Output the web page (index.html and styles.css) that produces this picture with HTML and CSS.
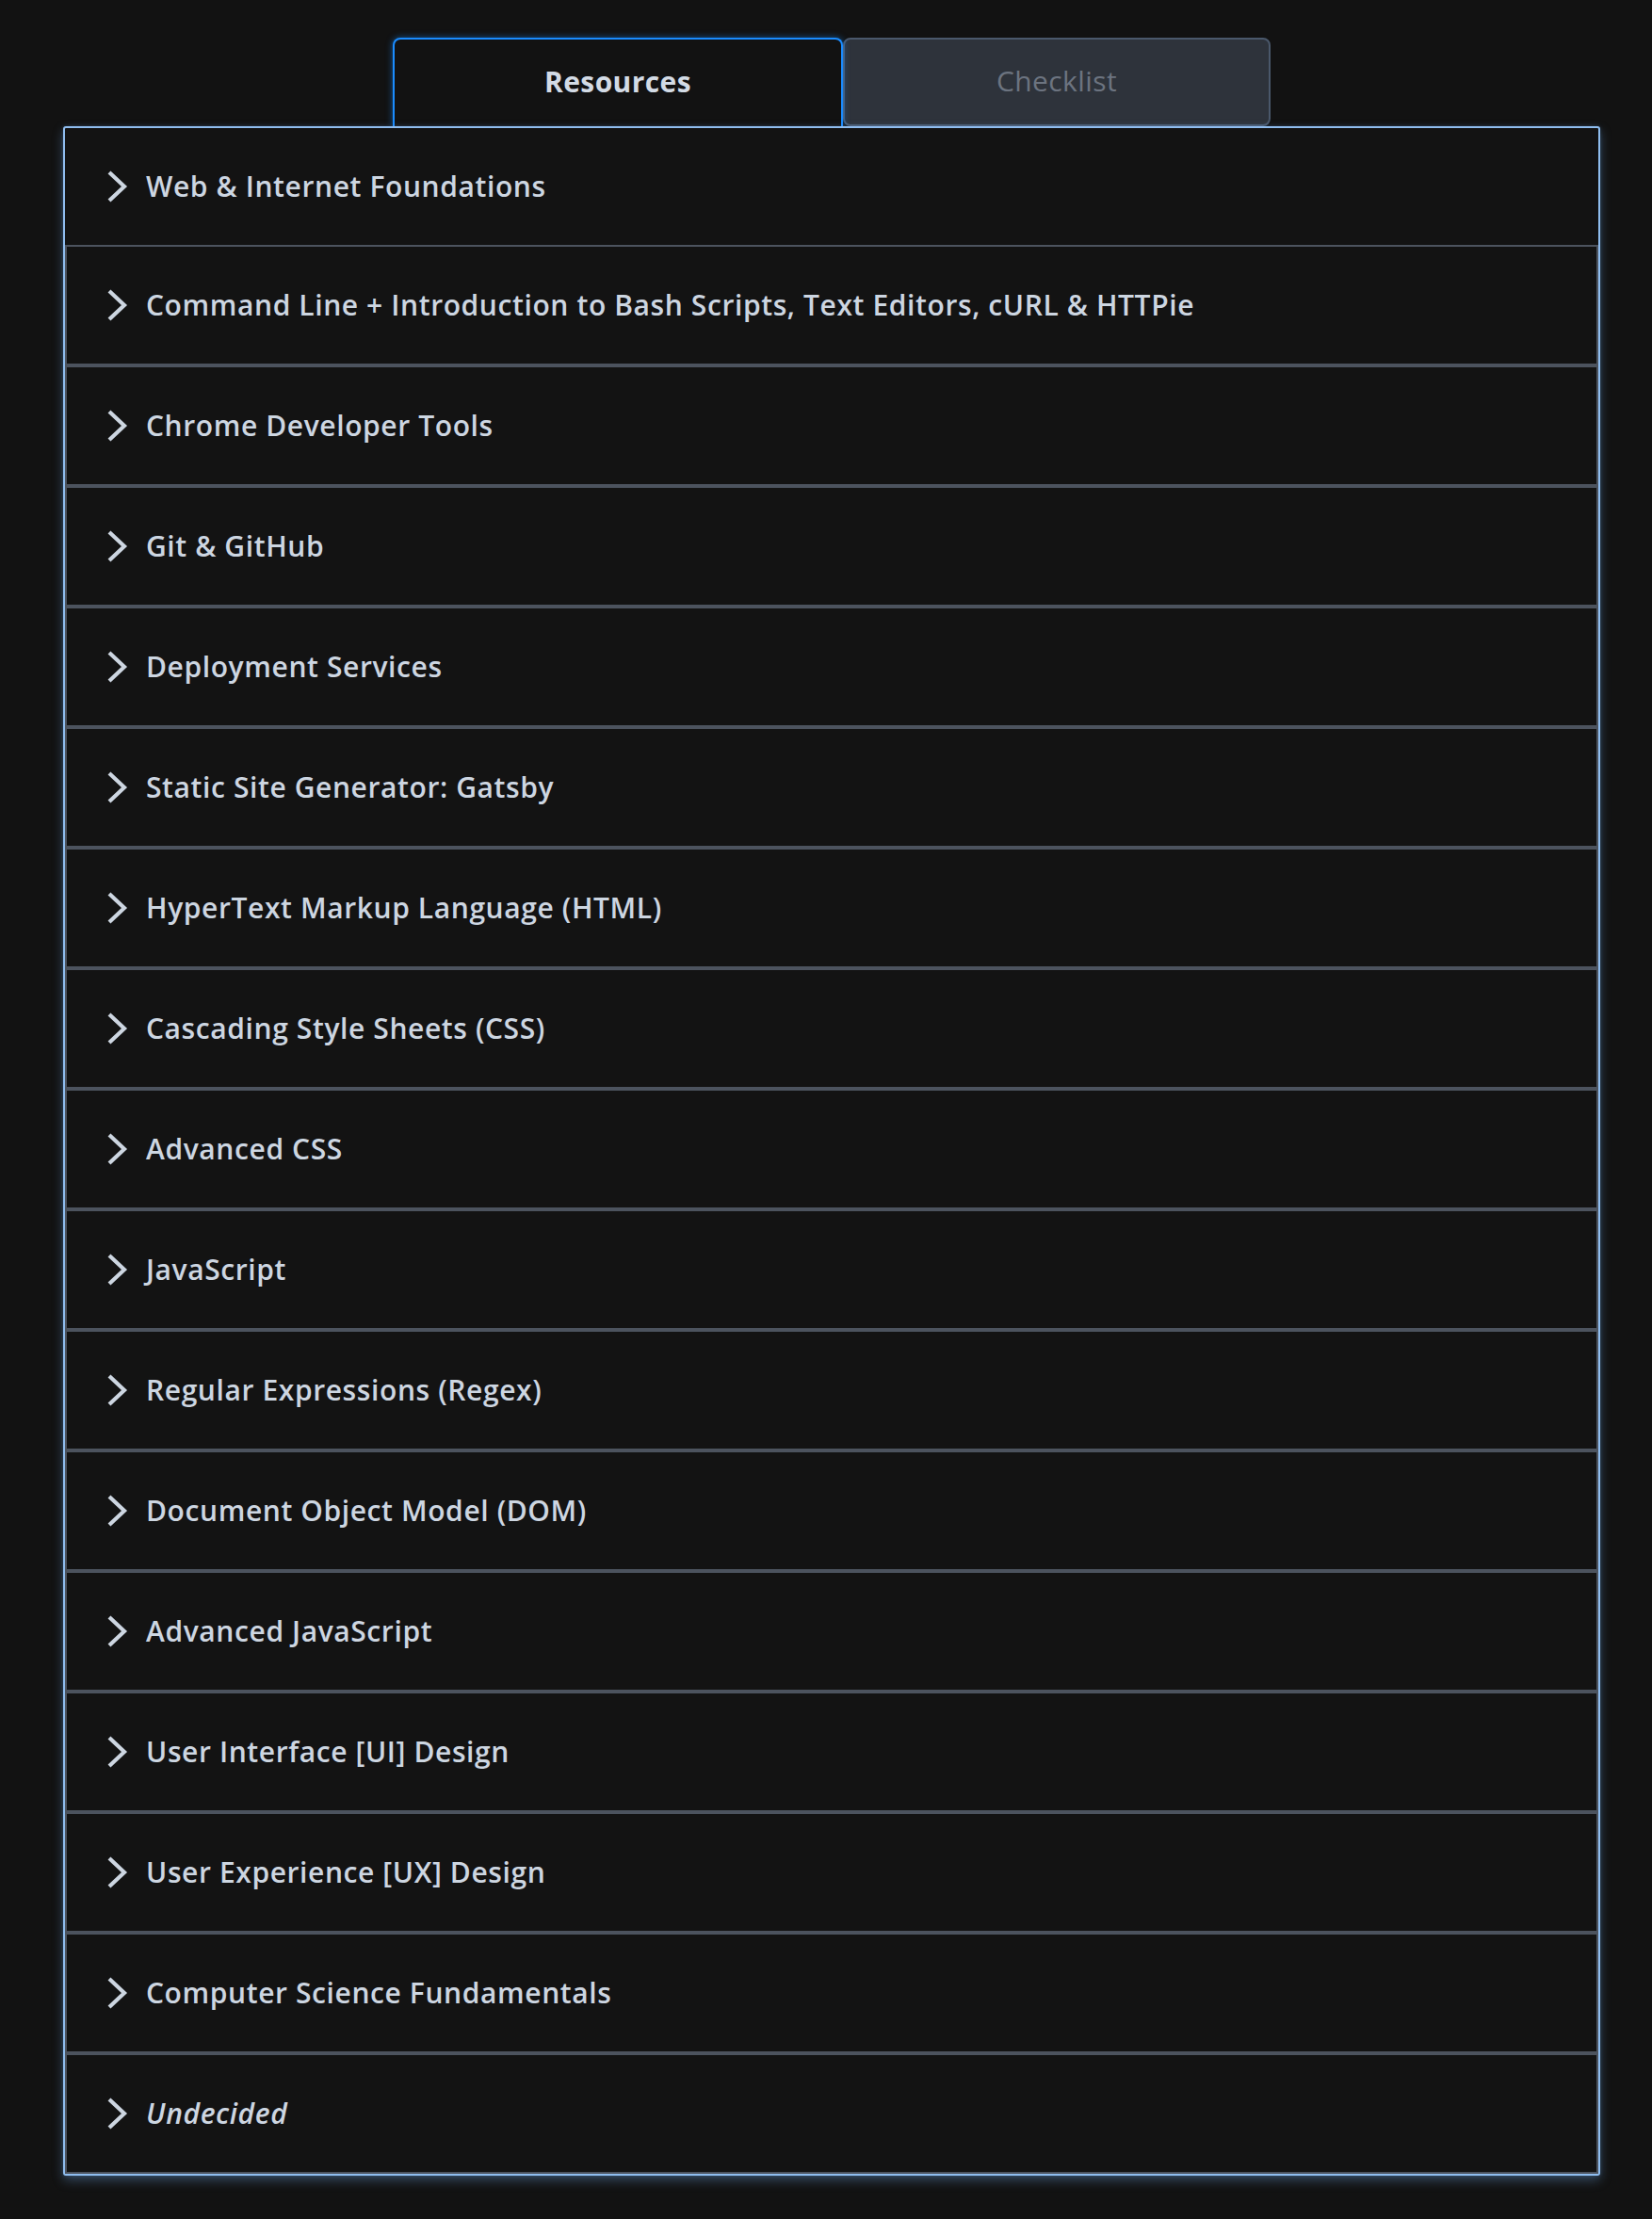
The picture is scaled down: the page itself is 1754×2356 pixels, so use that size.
FILE: index.html
```html
<!DOCTYPE html>
<html lang="en">
<head>
<meta charset="utf-8">
<title>Resources</title>
<link rel="stylesheet" href="styles.css">
</head>
<body>
<div class="page">
  <div class="tabs">
    <button class="tab tab-active">Resources</button>
    <button class="tab tab-inactive">Checklist</button>
  </div>
  <div class="accordion">
    <div class="item item-first"><svg class="chev" viewBox="0 0 24 34"><polyline points="3,2 19,17 3,32"/></svg><span class="label">Web &amp; Internet Foundations</span></div>
    <div class="item"><svg class="chev" viewBox="0 0 24 34"><polyline points="3,2 19,17 3,32"/></svg><span class="label">Command Line + Introduction to Bash Scripts, Text Editors, cURL &amp; HTTPie</span></div>
    <div class="item"><svg class="chev" viewBox="0 0 24 34"><polyline points="3,2 19,17 3,32"/></svg><span class="label">Chrome Developer Tools</span></div>
    <div class="item"><svg class="chev" viewBox="0 0 24 34"><polyline points="3,2 19,17 3,32"/></svg><span class="label">Git &amp; GitHub</span></div>
    <div class="item"><svg class="chev" viewBox="0 0 24 34"><polyline points="3,2 19,17 3,32"/></svg><span class="label">Deployment Services</span></div>
    <div class="item"><svg class="chev" viewBox="0 0 24 34"><polyline points="3,2 19,17 3,32"/></svg><span class="label">Static Site Generator: Gatsby</span></div>
    <div class="item"><svg class="chev" viewBox="0 0 24 34"><polyline points="3,2 19,17 3,32"/></svg><span class="label">HyperText Markup Language (HTML)</span></div>
    <div class="item"><svg class="chev" viewBox="0 0 24 34"><polyline points="3,2 19,17 3,32"/></svg><span class="label">Cascading Style Sheets (CSS)</span></div>
    <div class="item"><svg class="chev" viewBox="0 0 24 34"><polyline points="3,2 19,17 3,32"/></svg><span class="label">Advanced CSS</span></div>
    <div class="item"><svg class="chev" viewBox="0 0 24 34"><polyline points="3,2 19,17 3,32"/></svg><span class="label">JavaScript</span></div>
    <div class="item"><svg class="chev" viewBox="0 0 24 34"><polyline points="3,2 19,17 3,32"/></svg><span class="label">Regular Expressions (Regex)</span></div>
    <div class="item"><svg class="chev" viewBox="0 0 24 34"><polyline points="3,2 19,17 3,32"/></svg><span class="label">Document Object Model (DOM)</span></div>
    <div class="item"><svg class="chev" viewBox="0 0 24 34"><polyline points="3,2 19,17 3,32"/></svg><span class="label">Advanced JavaScript</span></div>
    <div class="item"><svg class="chev" viewBox="0 0 24 34"><polyline points="3,2 19,17 3,32"/></svg><span class="label">User Interface [UI] Design</span></div>
    <div class="item"><svg class="chev" viewBox="0 0 24 34"><polyline points="3,2 19,17 3,32"/></svg><span class="label">User Experience [UX] Design</span></div>
    <div class="item"><svg class="chev" viewBox="0 0 24 34"><polyline points="3,2 19,17 3,32"/></svg><span class="label">Computer Science Fundamentals</span></div>
    <div class="item"><svg class="chev" viewBox="0 0 24 34"><polyline points="3,2 19,17 3,32"/></svg><span class="label label-italic">Undecided</span></div>
  </div>
</div>
</body>
</html>
```
FILE: styles.css
```css
html, body {
  margin: 0;
  padding: 0;
  background: #121212;
}

body {
  font-family: "Open Sans", "Noto Sans", sans-serif;
  color: #cdd6e1;
}

.page {
  width: 1632px;
  margin-left: 67px;
  padding-top: 40px;
  padding-bottom: 40px;
}

.tabs {
  display: flex;
  justify-content: center;
  height: 94px;
}

.tab {
  box-sizing: border-box;
  height: 94px;
  font-family: inherit;
  font-size: 30px;
  letter-spacing: 0.4px;
  cursor: pointer;
  padding: 0 0 3px 0;
  margin: 0;
}

.tab-active {
  width: 478px;
  background: #121212;
  color: #d3dbe5;
  font-weight: 700;
  border: 2px solid #1a8cff;
  border-bottom: none;
  border-radius: 8px 8px 0 0;
  box-shadow: 0 0 7px rgba(26, 140, 255, 0.55);
  position: relative;
  z-index: 1;
}

.tab-inactive {
  width: 454px;
  background: #2e333b;
  color: #6c7480;
  font-weight: 400;
  border: 2px solid #4a586b;
  border-radius: 8px;
}

.accordion {
  position: relative;
  z-index: 2;
  background: #131313;
  border: 2px solid #8fbdef;
  border-radius: 3px;
  box-shadow: 0 5px 12px rgba(110, 165, 230, 0.35), 0 0 4px rgba(110, 165, 230, 0.2);
}

.item {
  display: flex;
  align-items: center;
  height: 124px;
  border: 2px solid #4c535e;
  padding-left: 42px;
  box-sizing: content-box;
}

.item-first {
  border: none;
  padding-left: 44px;
}

.chev {
  width: 24px;
  height: 34px;
  flex: none;
  margin-right: 18px;
  fill: none;
  stroke: #cdd6e1;
  stroke-width: 4.2;
  stroke-linecap: butt;
  stroke-linejoin: miter;
}

.label {
  display: inline-block;
  padding-bottom: 2px;
  font-size: 30px;
  font-weight: 600;
  letter-spacing: 0.6px;
}

.label-italic {
  font-style: italic;
}
```
